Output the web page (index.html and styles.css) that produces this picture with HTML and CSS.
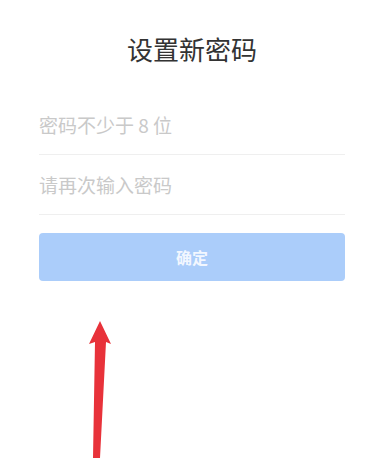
FILE: index.html
```html
<!DOCTYPE html>
<html lang="zh-CN">
<head>
<meta charset="utf-8">
<title>设置新密码</title>
<link rel="stylesheet" href="styles.css">
</head>
<body>
<div class="page">
  <h1 class="title">设置新密码</h1>
  <div class="field"><input class="input" type="password" placeholder="密码不少于 8 位"></div>
  <div class="field"><input class="input" type="password" placeholder="请再次输入密码"></div>
  <button class="submit" type="button">确定</button>
</div>
<svg class="arrow" width="379" height="458" viewBox="0 0 379 458">
  <polygon points="100,321 111,344 106,342 100,458 93,458 95,342 89,344" fill="#e8323a"/>
</svg>
</body>
</html>
```
FILE: styles.css
```css
html, body {
  margin: 0;
  padding: 0;
  background: #ffffff;
}
body {
  width: 379px;
  height: 458px;
  overflow: hidden;
  position: relative;
  font-family: "Noto Sans CJK SC", "Noto Sans", sans-serif;
}
.page {
  padding: 31px 34px 0 39px;
  display: flex;
  flex-direction: column;
}
.title {
  margin: 0 0 28px;
  font-size: 26px;
  line-height: 36px;
  font-weight: 400;
  color: #333333;
  text-align: center;
}
.field {
  height: 59px;
  border-bottom: 1px solid #efefef;
  display: flex;
  align-items: center;
}
.input {
  border: none;
  outline: none;
  padding: 0;
  margin: 0;
  width: 100%;
  height: 59px;
  background: transparent;
  font-family: "Noto Sans CJK SC", "Noto Sans", sans-serif;
  font-size: 19px;
  color: #333333;
}
.input::placeholder {
  color: #c9c9c9;
}
.submit {
  margin-top: 18px;
  height: 48px;
  border: none;
  border-radius: 4px;
  background: #abcdfa;
  color: #f2f7ff;
  font-family: "Noto Sans CJK SC", "Noto Sans", sans-serif;
  font-size: 16px;
  font-weight: 700;
  padding: 0;
}
.arrow {
  position: absolute;
  left: 0;
  top: 0;
  pointer-events: none;
}
```
